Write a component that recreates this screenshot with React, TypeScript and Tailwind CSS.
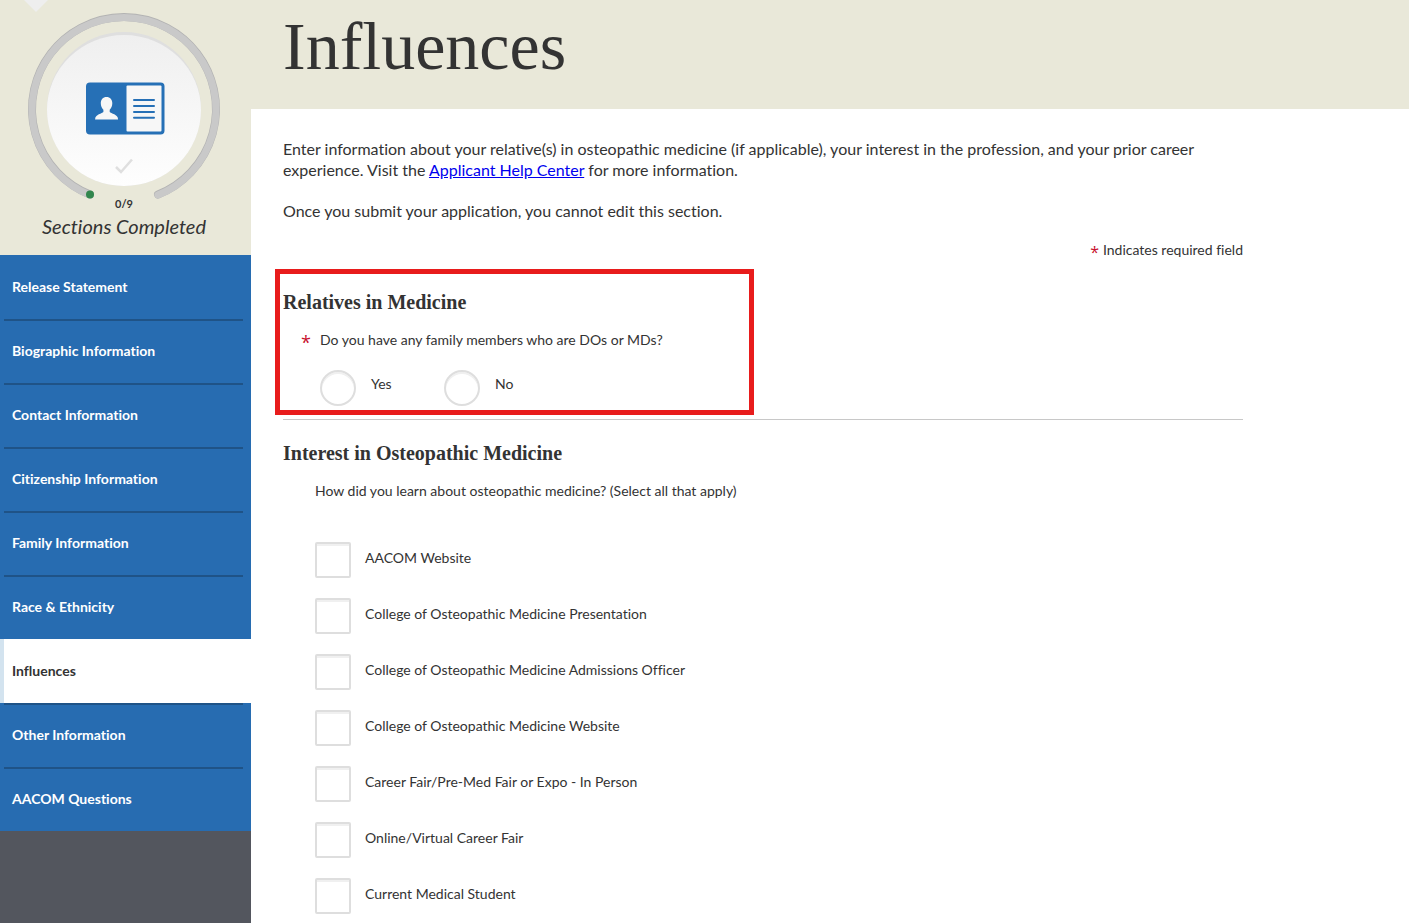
import { useState } from "react";

const navItems = [
  "Release Statement",
  "Biographic Information",
  "Contact Information",
  "Citizenship Information",
  "Family Information",
  "Race & Ethnicity",
  "Influences",
  "Other Information",
  "AACOM Questions",
];

const sources = [
  "AACOM Website",
  "College of Osteopathic Medicine Presentation",
  "College of Osteopathic Medicine Admissions Officer",
  "College of Osteopathic Medicine Website",
  "Career Fair/Pre-Med Fair or Expo - In Person",
  "Online/Virtual Career Fair",
  "Current Medical Student",
];

function ProgressBadge() {
  return (
    <svg width="200" height="200" viewBox="0 0 200 200" aria-hidden="true">
      <defs>
        <linearGradient id="disc" x1="0" y1="0" x2="0" y2="1">
          <stop offset="0" stopColor="#efefef" />
          <stop offset="1" stopColor="#fefefe" />
        </linearGradient>
      </defs>
      {/* ring, open at the bottom */}
      <path
        d="M66 185.5A92 92 0 1 1 134 185.5"
        fill="none"
        stroke="#b3b3b3"
        strokeWidth="8"
        strokeLinecap="round"
      />
      <path
        d="M66 186A92 92 0 1 1 134 186"
        fill="none"
        stroke="#c9c9c9"
        strokeWidth="7"
        strokeLinecap="round"
      />
      <circle cx="66" cy="185.5" r="4" fill="#31864d" />
      <circle cx="100" cy="100" r="77" fill="#dfdfdf" />
      <path
        d="M23 101A77 75 0 0 1 177 101A77 76 0 0 1 23 101Z"
        fill="url(#disc)"
      />
      {/* id card */}
      <rect x="62" y="73.5" width="78.5" height="52" rx="4" fill="#2670b6" />
      <rect x="102.5" y="76.5" width="35" height="46" rx="1" fill="#f7f7f7" />
      <path
        d="M82.500 88c-3.600 0-5.700 2.600-5.700 6.200 0 2.700 1.100 5 2.600 6.500v2.400c-1 1.700-8.300 2-8.300 7.400h23c0-5.400-7.300-5.700-8.400-7.400v-2.400c1.500-1.500 2.600-3.800 2.600-6.500 0-3.600-2.200-6.200-5.800-6.200z"
        fill="#f7f7f7"
      />
      <path
        d="M110 91H130M110 97H130M110 103H130M110 108.700H130"
        stroke="#2670b6"
        strokeWidth="2"
        strokeLinecap="round"
      />
      <path d="M92 158l5 5 11-12.500" fill="none" stroke="#dfdfdf" strokeWidth="2.500" />
    </svg>
  );
}

function Sidebar() {
  return (
    <aside className="w-[251px] shrink-0 bg-[#53565e]">
      <div className="relative flex h-[255px] flex-col items-center bg-[#e9e8d9] pt-[9px] pr-[3px]">
        <svg className="absolute top-0 left-6" width="24" height="12" aria-hidden="true">
          <path d="M0 0H24L12 12Z" fill="#eeeeee" />
        </svg>
        <ProgressBadge />
        <p className="-mt-3 text-[11px] leading-[14px] font-bold">0/9</p>
        <p className="text-xl leading-[30px] italic">Sections Completed</p>
      </div>
      <nav>
        <ul>
          {navItems.map((item, index) => {
            const active = item === "Influences";
            return (
              <li key={item} className={active ? "bg-white" : "bg-[#276cb1]"}>
                <a
                  href="#"
                  aria-current={active ? "page" : undefined}
                  className={
                    active
                      ? "flex h-16 border-l-4 border-[#d3e3ef] text-[#333]"
                      : "flex h-16 pr-2 pl-1 text-white"
                  }
                >
                  <span
                    className={
                      index === 0 || active
                        ? "flex flex-1 items-center pl-2 text-sm font-bold"
                        : "flex flex-1 items-center border-t-2 border-[#1f5387] pb-0.5 pl-2 text-sm font-bold"
                    }
                  >
                    {item}
                  </span>
                </a>
              </li>
            );
          })}
        </ul>
      </nav>
    </aside>
  );
}

export default function App() {
  const [relatives, setRelatives] = useState("");

  return (
    <div className="flex min-h-screen bg-white font-['Lato',sans-serif] text-[#333] [font-variant-ligatures:none]">
      <Sidebar />
      <main className="min-w-0 flex-1">
        <header className="h-[109px] bg-[#e9e8d9] px-8 pt-2">
          <h1 className="font-['Liberation_Serif',serif] text-[68px] leading-[76px] [font-variant-ligatures:normal]">
            Influences
          </h1>
        </header>

        <div className="max-w-[1024px] px-8 pt-[29px]">
          <p className="text-base leading-[21px]">
            Enter information about your relative(s) in osteopathic medicine (if
            applicable), your interest in the profession, and your prior career
            experience. Visit the{" "}
            <a href="#" className="text-[#0000ee] underline">
              Applicant Help Center
            </a>{" "}
            for more information.
          </p>
          <p className="mt-5 text-base leading-[21px]">
            Once you submit your application, you cannot edit this section.
          </p>
          <p className="mt-[19px] flex justify-end gap-1 text-sm leading-5">
            <span className="pt-1 font-['Open_Sans',sans-serif] text-base leading-4 text-[#c8102e]">
              *
            </span>
            Indicates required field
          </p>

          <section className="relative mt-[30px] border-b border-[#c8c8c8] pb-[13px]">
            <div className="pointer-events-none absolute -top-[21px] -left-2 h-[146px] w-[479px] border-5 border-[#e81c1c]" />
            <h2 className="font-['Liberation_Serif',serif] text-xl leading-6 font-bold">
              Relatives in Medicine
            </h2>
            <fieldset className="mt-4">
              <legend className="flex pl-[18px] text-sm leading-5">
                <span className="w-[19px] pt-1 font-['Open_Sans',sans-serif] text-lg leading-4 text-[#c8102e]">
                  *
                </span>
                Do you have any family members who are DOs or MDs?
              </legend>
              <div className="mt-5 flex pl-[37px]">
                {["Yes", "No"].map((option) => (
                  <label key={option} className="flex w-[124px] text-sm">
                    <input
                      type="radio"
                      name="relatives"
                      value={option}
                      checked={relatives === option}
                      onChange={() => setRelatives(option)}
                      className="size-9 appearance-none rounded-full border-2 border-[#dedede] bg-white shadow-[inset_0_2px_0_#f0f0f0] checked:bg-[#276cb1]"
                    />
                    <span className="ml-[15px] leading-7">{option}</span>
                  </label>
                ))}
              </div>
            </fieldset>
          </section>

          <section className="pt-[21px]">
            <h2 className="font-['Liberation_Serif',serif] text-xl leading-6 font-bold">
              Interest in Osteopathic Medicine
            </h2>
            <fieldset className="mt-4 pl-8">
              <legend className="text-sm leading-5">
                How did you learn about osteopathic medicine? (Select all that
                apply)
              </legend>
              <div className="mt-[41px] flex flex-col gap-5">
                {sources.map((source) => (
                  <label key={source} className="flex text-sm">
                    <input
                      type="checkbox"
                      className="size-9 shrink-0 appearance-none rounded-xs border-2 border-[#dedede] bg-white shadow-[inset_0_2px_0_#f0f0f0] checked:bg-[#276cb1]"
                    />
                    <span className="ml-3.5 leading-8">{source}</span>
                  </label>
                ))}
              </div>
            </fieldset>
          </section>
        </div>
      </main>
    </div>
  );
}
